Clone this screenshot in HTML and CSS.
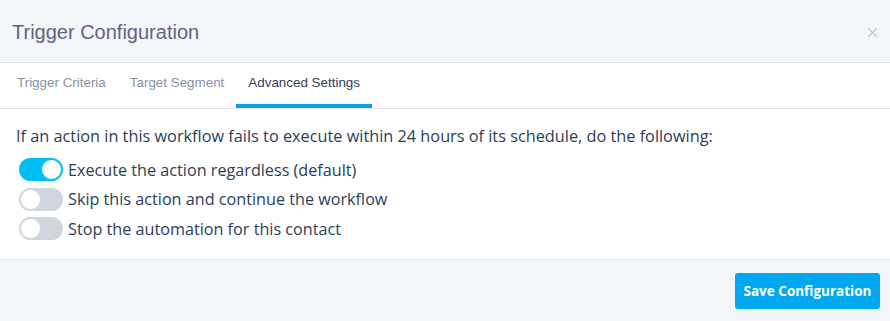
FILE: index.html
```html
<!DOCTYPE html>
<html lang="en">
<head>
<meta charset="UTF-8">
<meta name="viewport" content="width=device-width, initial-scale=1.0">
<title>Trigger Configuration</title>
<link rel="stylesheet" href="styles.css">
</head>
<body>

<div class="modal">
  <div class="modal-header">
    <h4 class="modal-title">Trigger Configuration</h4>
    <button class="close" aria-label="Close">
      <svg width="11" height="11" viewBox="0 0 11 11"><path d="M1 1L10 10M10 1L1 10" stroke="#c4c7cc" stroke-width="1.3" fill="none"/></svg>
    </button>
  </div>

  <div class="tabs">
    <a class="tab">Trigger Criteria</a>
    <a class="tab">Target Segment</a>
    <a class="tab active">Advanced Settings</a>
  </div>

  <div class="modal-body">
    <p class="intro">If an action in this workflow fails to execute within 24 hours of its schedule, do the following:</p>
    <label class="option"><span class="switch on"><span class="knob"></span></span>Execute the action regardless (default)</label>
    <label class="option"><span class="switch"><span class="knob"></span></span>Skip this action and continue the workflow</label>
    <label class="option"><span class="switch"><span class="knob"></span></span>Stop the automation for this contact</label>
  </div>

  <div class="modal-footer">
    <button class="btn-primary">Save Configuration</button>
  </div>
</div>

</body>
</html>
```

FILE: styles.css
```css
body {
  margin: 0;
  background: #fff;
  font-family: "Open Sans", Lato, sans-serif;
}
.modal {
  width: 890px;
  height: 321px;
  display: flex;
  flex-direction: column;
}
.modal-header {
  height: 62px;
  background: #f3f6f8;
  border-bottom: 1px solid #e1e5e9;
  display: flex;
  align-items: center;
  justify-content: space-between;
  padding: 0 8px 0 12px;
}
.modal-title {
  margin: 0;
  font-family: "Liberation Sans", Arial, sans-serif;
  font-weight: normal;
  font-size: 20px;
  color: #5f6580;
  padding-top: 2px;
}
.close {
  border: 0;
  background: none;
  padding: 4px;
  margin-top: 2px;
  display: flex;
}
.tabs {
  height: 45px;
  border-bottom: 1px solid #dfe3e8;
  display: flex;
  padding-left: 5px;
}
.tab {
  font-family: "Liberation Sans", Arial, sans-serif;
  font-size: 13.4px;
  color: #8593a5;
  padding: 12px 12px 0;
  border-bottom: 4px solid transparent;
}
.tab.active {
  color: #2f4257;
  border-bottom-color: #0aa3e3;
}
.modal-body {
  flex: 1;
  padding: 17px 16px 0;
  border-bottom: 1px solid #e4e7ea;
}
.intro {
  margin: 0 0 9px;
  font-size: 16.3px;
  line-height: 20px;
  color: #2c3e56;
}
.option {
  display: flex;
  align-items: center;
  gap: 5px;
  height: 29.5px;
  font-size: 16.2px;
  color: #2c3e56;
  padding-left: 3px;
}
.switch {
  width: 44px;
  height: 23px;
  border-radius: 12px;
  background: #d0d6dc;
  display: flex;
  align-items: center;
  padding: 1px;
  box-sizing: border-box;
}
.switch .knob {
  width: 21px;
  height: 21px;
  border-radius: 50%;
  background: #fff;
  box-sizing: border-box;
  border: 1px solid #d0d6dc;
}
.switch.on {
  background: #00bef3;
  justify-content: flex-end;
}
.switch.on .knob {
  border-color: #00bef3;
}
.modal-footer {
  height: 61px;
  background: #f3f6f8;
  display: flex;
  align-items: center;
  justify-content: flex-end;
  padding-right: 10px;
}
.btn-primary {
  background: #00a9ef;
  color: #fff;
  border: 0;
  border-radius: 3px;
  width: 145px;
  height: 36px;
  font-family: "Open Sans", sans-serif;
  font-weight: bold;
  font-size: 13.5px;
}
```
